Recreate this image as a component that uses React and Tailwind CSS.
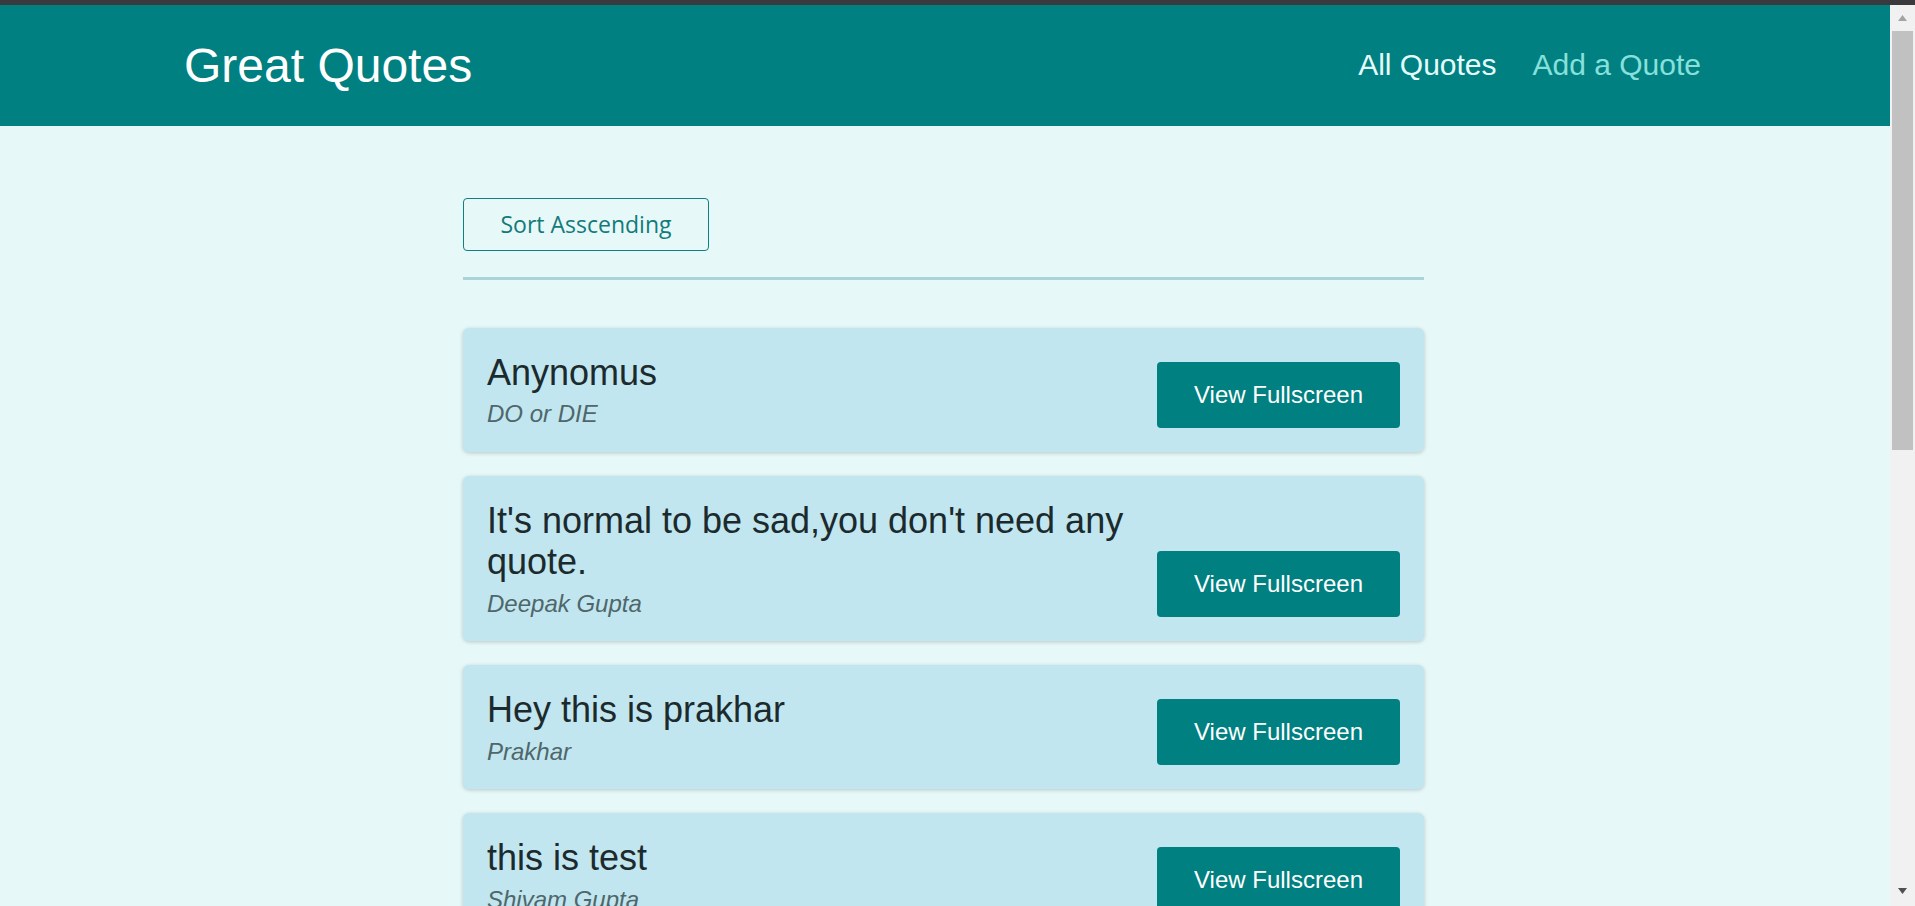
import React from "react";

const quotes = [
  { text: "Anynomus", author: "DO or DIE" },
  { text: "It's normal to be sad,you don't need any quote.", author: "Deepak Gupta" },
  { text: "Hey this is prakhar", author: "Prakhar" },
  { text: "this is test", author: "Shivam Gupta" },
];

function QuoteCard({ q }) {
  return (
    <li className="flex items-end justify-between rounded-[6px] bg-[#c1e6ef] p-6 shadow-[0_1px_4px_rgba(0,0,0,0.2)]">
      <figure className="m-0 max-w-[680px]">
        <blockquote className="m-0 text-[36px] leading-[1.15] text-[#1c2a2d]">{q.text}</blockquote>
        <figcaption className="mt-[7px] text-[24px] italic leading-[1.15] text-[#4f676b]">{q.author}</figcaption>
      </figure>
      <button className="flex h-[66px] w-[243px] shrink-0 items-center justify-center rounded-[4px] bg-[#008080] text-[24px] text-white">
        View Fullscreen
      </button>
    </li>
  );
}

export default function App() {
  return (
    <div
      className="flex h-[906px] w-[1915px] flex-col overflow-hidden bg-[#e7f8f8]"
      style={{ fontFamily: '"Liberation Sans", Arial, sans-serif' }}
    >
      <div className="h-[5px] shrink-0 bg-[#3a3a3e]" />
      <div className="flex min-h-0 flex-1">
        <div className="min-w-0 flex-1 overflow-hidden">
          <header className="flex h-[121px] items-center justify-between bg-[#008080] pl-[184px] pr-[189px]">
            <div className="text-[48px] leading-[1.15] text-white">Great Quotes</div>
            <nav>
              <ul className="flex items-center gap-[36px] text-[30px] leading-[1.15]">
                <li className="text-[#e6fcfc]">All Quotes</li>
                <li className="text-[#88e0dc]">Add a Quote</li>
              </ul>
            </nav>
          </header>
          <main className="ml-[463px] w-[961px] pt-[72px]">
            <button
              className="h-[53px] w-[246px] rounded-[4px] border border-[#0f7f80] text-[23px] text-[#137a7c]"
              style={{ fontFamily: '"Open Sans", "Noto Sans", sans-serif' }}
            >
              Sort Asscending
            </button>
            <div className="mt-[26px] h-[3px] bg-[#abd4d7]" />
            <ul className="mt-[48px] flex flex-col gap-6">
              {quotes.map((q, i) => (
                <QuoteCard key={i} q={q} />
              ))}
            </ul>
          </main>
        </div>
        <div className="flex w-[25px] shrink-0 flex-col bg-[#f1f1f1]">
          <div className="flex h-[26px] items-center justify-center">
            <svg width="9" height="6" viewBox="0 0 9 6">
              <polygon points="4.5,0 9,6 0,6" fill="#a3a3a3" />
            </svg>
          </div>
          <div className="mx-auto h-[419px] w-[21px] bg-[#c1c1c1]" />
          <div className="flex-1" />
          <div className="flex h-[22px] items-start justify-center pt-[4px]">
            <svg width="9" height="6" viewBox="0 0 9 6">
              <polygon points="0,0 9,0 4.5,6" fill="#505050" />
            </svg>
          </div>
        </div>
      </div>
    </div>
  );
}
